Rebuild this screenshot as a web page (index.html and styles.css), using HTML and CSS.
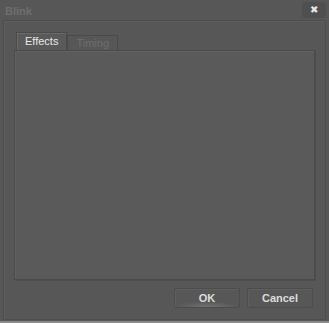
FILE: index.html
```html
<!DOCTYPE html>
<html lang="en">
<head>
    <meta charset="UTF-8">
    <title>Blink</title>
    <link rel="stylesheet" href="styles.css">
</head>
<body>
    <div class="dialog">
        <div class="titlebar">
            <span class="title">Blink</span>
            <button class="close">&#x2716;</button>
        </div>

        <div class="frame">
            <div class="tabs">
                <div class="tab active">Effects</div>
                <div class="tab">Timing</div>
            </div>
            <div class="tab-panel"></div>

            <div class="actions">
                <button class="btn ok">OK</button>
                <button class="btn">Cancel</button>
            </div>
        </div>
    </div>
</body>
</html>
```

FILE: styles.css
```css
html, body {
    margin: 0;
    background: #545454;
}

body {
    font-family: 'Liberation Sans', Arial, sans-serif;
    font-size: 11px;
}

.dialog {
    width: 329px;
    height: 323px;
    box-sizing: border-box;
    background: #575757;
    border-bottom: 2px solid #8a8a8a;
    display: flex;
    flex-direction: column;
}

.titlebar {
    height: 20px;
    display: flex;
    align-items: center;
    justify-content: space-between;
    padding: 0 3px 0 5px;
}

.title {
    color: #6f6f6f;
    font-weight: bold;
    font-size: 11px;
    margin-top: 2px;
}

.close {
    width: 24px;
    height: 16px;
    border: none;
    border-radius: 4px;
    background: #4f4f4f;
    color: #e6e6e6;
    font-size: 10px;
    line-height: 16px;
    padding: 0;
}

.frame {
    flex: 1;
    margin: 0 3px 1px 3px;
    border: 1px solid #4d4d4d;
    box-shadow: inset 1px 1px 0 #5e5e5e;
    padding: 11px 10px 0 10px;
    display: flex;
    flex-direction: column;
}

.tabs {
    display: flex;
    align-items: flex-end;
    height: 18px;
    padding-left: 2px;
}

.tab {
    height: 14px;
    padding: 0 8px;
    border: 1px solid #4a4a4a;
    border-bottom: none;
    color: #6e6e6e;
    font-size: 11px;
    line-height: 14px;
    background: #575757;
}

.tab.active {
    height: 17px;
    line-height: 17px;
    color: #e8e8e8;
    background: #5a5a5a;
    border-color: #4a4a4a;
    box-shadow: inset 1px 1px 0 #6a6a6a;
}

.tab-panel {
    height: 228px;
    background: #5a5a5a;
    border: 1px solid #4a4a4a;
    box-shadow: 1px 1px 0 #4f4f4f, inset 1px 1px 0 #626262;
}

.actions {
    display: flex;
    justify-content: flex-end;
    gap: 7px;
    padding: 8px 2px 0 0;
}

.btn {
    width: 66px;
    height: 20px;
    font-family: inherit;
    font-size: 11px;
    font-weight: bold;
    color: #dcdcdc;
    background: #575757;
    border: 1px solid #4c4c4c;
    border-radius: 2px;
    box-shadow: inset 1px 1px 0 #5f5f5f;
    padding: 0;
}

.btn.ok {
    background: radial-gradient(ellipse 50% 30% at 50% 100%, #727272, #575757);
}
```
